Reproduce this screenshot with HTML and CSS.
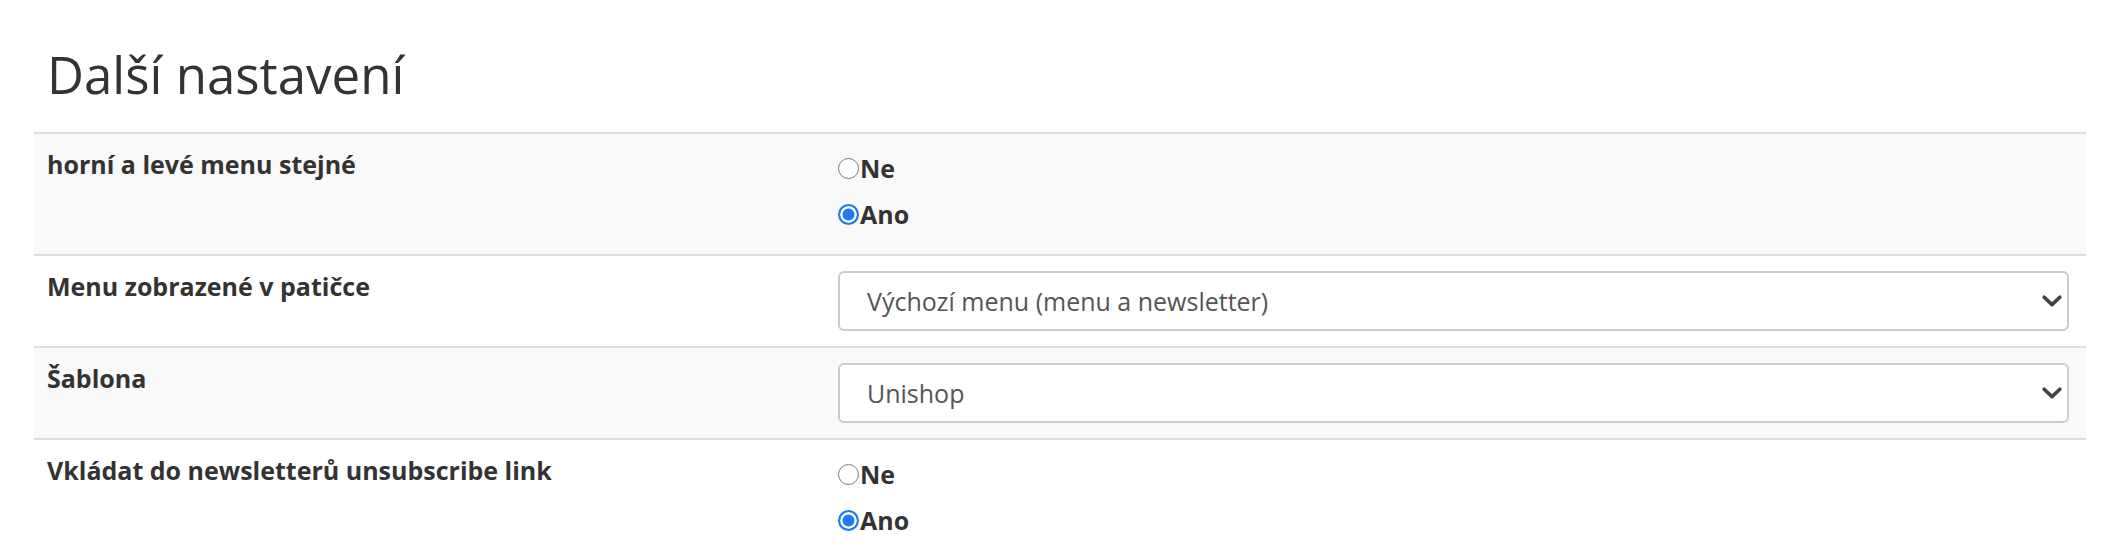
FILE: index.html
```html
<!DOCTYPE html>
<html lang="cs">
<head>
<meta charset="utf-8">
<title>Další nastavení</title>
<link rel="stylesheet" href="styles.css">
</head>
<body>
<div class="page">
  <h2 class="title">Další nastavení</h2>
  <div class="settings">
    <div class="row striped">
      <div class="cell label">horní a levé menu stejné</div>
      <div class="cell value">
        <div class="radios">
          <label class="radio"><input type="radio" name="menu_same" value="0"><span>Ne</span></label>
          <label class="radio"><input type="radio" name="menu_same" value="1" checked><span>Ano</span></label>
        </div>
      </div>
    </div>
    <div class="row">
      <div class="cell label">Menu zobrazené v patičce</div>
      <div class="cell value">
        <div class="select-wrap">
          <select class="select"><option>Výchozí menu (menu a newsletter)</option></select>
          <svg class="chevron" width="20" height="12" viewBox="0 0 20 12" aria-hidden="true"><path d="M2.2 2.2 L10 9.6 L17.8 2.2" fill="none" stroke="#444" stroke-width="3.6" stroke-linecap="round" stroke-linejoin="round"/></svg>
        </div>
      </div>
    </div>
    <div class="row striped">
      <div class="cell label">Šablona</div>
      <div class="cell value">
        <div class="select-wrap">
          <select class="select"><option>Unishop</option></select>
          <svg class="chevron" width="20" height="12" viewBox="0 0 20 12" aria-hidden="true"><path d="M2.2 2.2 L10 9.6 L17.8 2.2" fill="none" stroke="#444" stroke-width="3.6" stroke-linecap="round" stroke-linejoin="round"/></svg>
        </div>
      </div>
    </div>
    <div class="row">
      <div class="cell label">Vkládat do newsletterů unsubscribe link</div>
      <div class="cell value">
        <div class="radios">
          <label class="radio"><input type="radio" name="unsub" value="0"><span>Ne</span></label>
          <label class="radio"><input type="radio" name="unsub" value="1" checked><span>Ano</span></label>
        </div>
      </div>
    </div>
  </div>
</div>
</body>
</html>
```
FILE: styles.css
```css
html, body {
  margin: 0;
  padding: 0;
  background: #fff;
}
body {
  font-family: "Open Sans", "Liberation Sans", sans-serif;
  color: #333;
}
.page {
  padding: 0 26px 0 34px;
}
.title {
  margin: 0;
  padding: 44px 0 27px 13px;
  font-size: 51px;
  line-height: 1.2;
  font-weight: 400;
  color: #333;
}
.settings {
  display: flex;
  flex-direction: column;
}
.row {
  display: grid;
  grid-template-columns: 790px 1fr;
  border-top: 2px solid #dddddd;
}
.row.striped {
  background: #f9f9f9;
}
.cell {
  padding: 15px 17px 15px 13px;
}
.label {
  padding-top: 13px;
  font-size: 25px;
  line-height: 1.4;
  font-weight: 700;
}
.value {
  padding-left: 14px;
}
.radios {
  display: flex;
  flex-direction: column;
  gap: 8px;
  margin-bottom: 6px;
}
.radio {
  display: flex;
  align-items: center;
  height: 38px;
  font-size: 25px;
  font-weight: 700;
  color: #333;
}
.radio input {
  appearance: none;
  -webkit-appearance: none;
  box-sizing: border-box;
  width: 21px;
  height: 21px;
  margin: 0 1px 0 0;
  border: 1.5px solid #7a7a7a;
  border-radius: 50%;
  background: #fff;
}
.radio input:checked {
  border: 2px solid #1b7cf5;
  background: #1b7cf5;
  box-shadow: inset 0 0 0 2.5px #fff;
}
.select-wrap {
  position: relative;
}
.select {
  display: block;
  width: 100%;
  height: 60px;
  margin: 0;
  padding: 0 50px 0 27px;
  appearance: none;
  -webkit-appearance: none;
  background: #fff;
  border: 2px solid #cccccc;
  border-radius: 6px;
  font-family: "Open Sans", "Liberation Sans", sans-serif;
  font-size: 25px;
  color: #555;
}
.chevron {
  position: absolute;
  right: 7px;
  top: 24px;
  pointer-events: none;
}
```
